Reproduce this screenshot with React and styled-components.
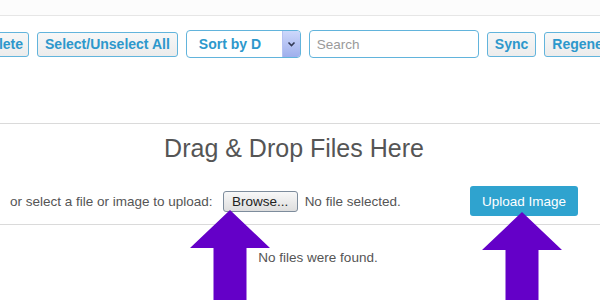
import React from "react";
import styled, { createGlobalStyle } from "styled-components";

const GlobalStyle = createGlobalStyle`
    html, body {
        margin: 0;
        padding: 0;
        background: #ffffff;
        overflow: hidden;
    }
    body {
        font-family: "Liberation Sans", Arial, sans-serif;
    }
`;

const Page = styled.div`
    position: relative;
    width: 600px;
    height: 300px;
    overflow: hidden;
    background: #fff;
`;

const TopBand = styled.div`
    height: 15px;
    border-bottom: 1px solid #e6e6e6;
    background: #fcfcfc;
`;

const Toolbar = styled.div`
    display: flex;
    align-items: center;
    gap: 8px;
    margin: 14px 0 0 -27px;
    height: 28px;
    white-space: nowrap;
`;

const ToolButton = styled.button`
    flex: none;
    height: 25px;
    padding: 0 ${(p) => (p.$tight ? 5 : 7)}px 0 7px;
    border: 1px solid #62b4dc;
    border-radius: 3px;
    background: linear-gradient(#f7f7f7, #ececec);
    color: #2d98cc;
    font-family: "Liberation Sans", Arial, sans-serif;
    font-weight: bold;
    font-size: 14px;
`;

const SortSelect = styled.div`
    flex: none;
    display: flex;
    align-items: stretch;
    width: 115px;
    height: 28px;
    box-sizing: border-box;
    border: 1px solid #62b4dc;
    border-radius: 4px;
    background: #fff;
    overflow: hidden;

    .label {
        flex: 1;
        display: flex;
        align-items: center;
        padding-left: 12px;
        color: #2d98cc;
        font-weight: bold;
        font-size: 14px;
    }

    .arrow {
        width: 17px;
        display: flex;
        align-items: center;
        justify-content: center;
        background: linear-gradient(#cdd8fb, #9fafec);
        border-left: 1px solid #b5c2f2;
    }
`;

const SearchInput = styled.div`
    flex: none;
    width: 170px;
    height: 28px;
    box-sizing: border-box;
    border: 1px solid #62b4dc;
    border-radius: 4px;
    padding-left: 7px;
    display: flex;
    align-items: center;
    color: #9a9a9a;
    font-size: 13.5px;
`;

const DropZone = styled.section`
    margin-top: 65px;
    border-top: 1px solid #dadada;
`;

const Heading = styled.h2`
    margin: 10px 0 0;
    padding-right: 12px;
    text-align: center;
    font-weight: normal;
    font-size: 25px;
    line-height: 29px;
    color: #555;
`;

const UploadRow = styled.div`
    display: flex;
    align-items: center;
    margin-top: 23px;
    padding: 0 22px 8px 10px;
    height: 30px;
    font-size: 13.5px;
    color: #555;
    border-bottom: 1px solid #dadada;

    .hint {
        margin-right: 10px;
    }

    .chosen {
        margin-left: 7px;
    }
`;

const BrowseButton = styled.button`
    height: 21px;
    width: 75px;
    padding: 0;
    border: 1px solid #7d8c9c;
    border-radius: 3px;
    background: linear-gradient(#f8f8f8, #dedede);
    color: #222;
    font-family: "Liberation Sans", Arial, sans-serif;
    font-size: 13.5px;
`;

const UploadButton = styled.button`
    margin-left: auto;
    width: 108px;
    height: 30px;
    border: none;
    border-radius: 3px;
    background: #2fa3cf;
    color: #fff;
    font-family: "Liberation Sans", Arial, sans-serif;
    font-size: 13.5px;
`;

const EmptyNote = styled.p`
    margin: 25px 0 0;
    padding-left: 36px;
    text-align: center;
    font-size: 13.5px;
    line-height: 16px;
    color: #555;
`;

const Arrow = styled.svg`
    position: absolute;
    left: ${(p) => p.$left}px;
    top: ${(p) => p.$top}px;
`;

const PointerArrow = ({ left, top }) => (
    <Arrow $left={left} $top={top} width="80" height="92" viewBox="0 0 80 92">
        <polygon
            points="40,0 80,38 56.5,38 56.5,92 23.5,92 23.5,38 0,38"
            fill="#6400c8"
        />
    </Arrow>
);

const App = () => {
    return (
        <Page>
            <GlobalStyle />
            <TopBand />
            <Toolbar>
                <ToolButton $tight>Delete</ToolButton>
                <ToolButton>Select/Unselect All</ToolButton>
                <SortSelect>
                    <span className="label">Sort by D</span>
                    <span className="arrow">
                        <svg width="9" height="6" viewBox="0 0 9 6">
                            <polyline
                                points="1.5,1.5 4.5,4.5 7.5,1.5"
                                fill="none"
                                stroke="#333a55"
                                strokeWidth="1.6"
                            />
                        </svg>
                    </span>
                </SortSelect>
                <SearchInput>Search</SearchInput>
                <ToolButton>Sync</ToolButton>
                <ToolButton>Regenerate Thumbnails</ToolButton>
            </Toolbar>
            <DropZone>
                <Heading>Drag &amp; Drop Files Here</Heading>
                <UploadRow>
                    <span className="hint">or select a file or image to upload:</span>
                    <BrowseButton>Browse...</BrowseButton>
                    <span className="chosen">No file selected.</span>
                    <UploadButton>Upload Image</UploadButton>
                </UploadRow>
                <EmptyNote>No files were found.</EmptyNote>
            </DropZone>
            <PointerArrow left={190} top={210} />
            <PointerArrow left={482} top={212} />
        </Page>
    );
};

export default App;
